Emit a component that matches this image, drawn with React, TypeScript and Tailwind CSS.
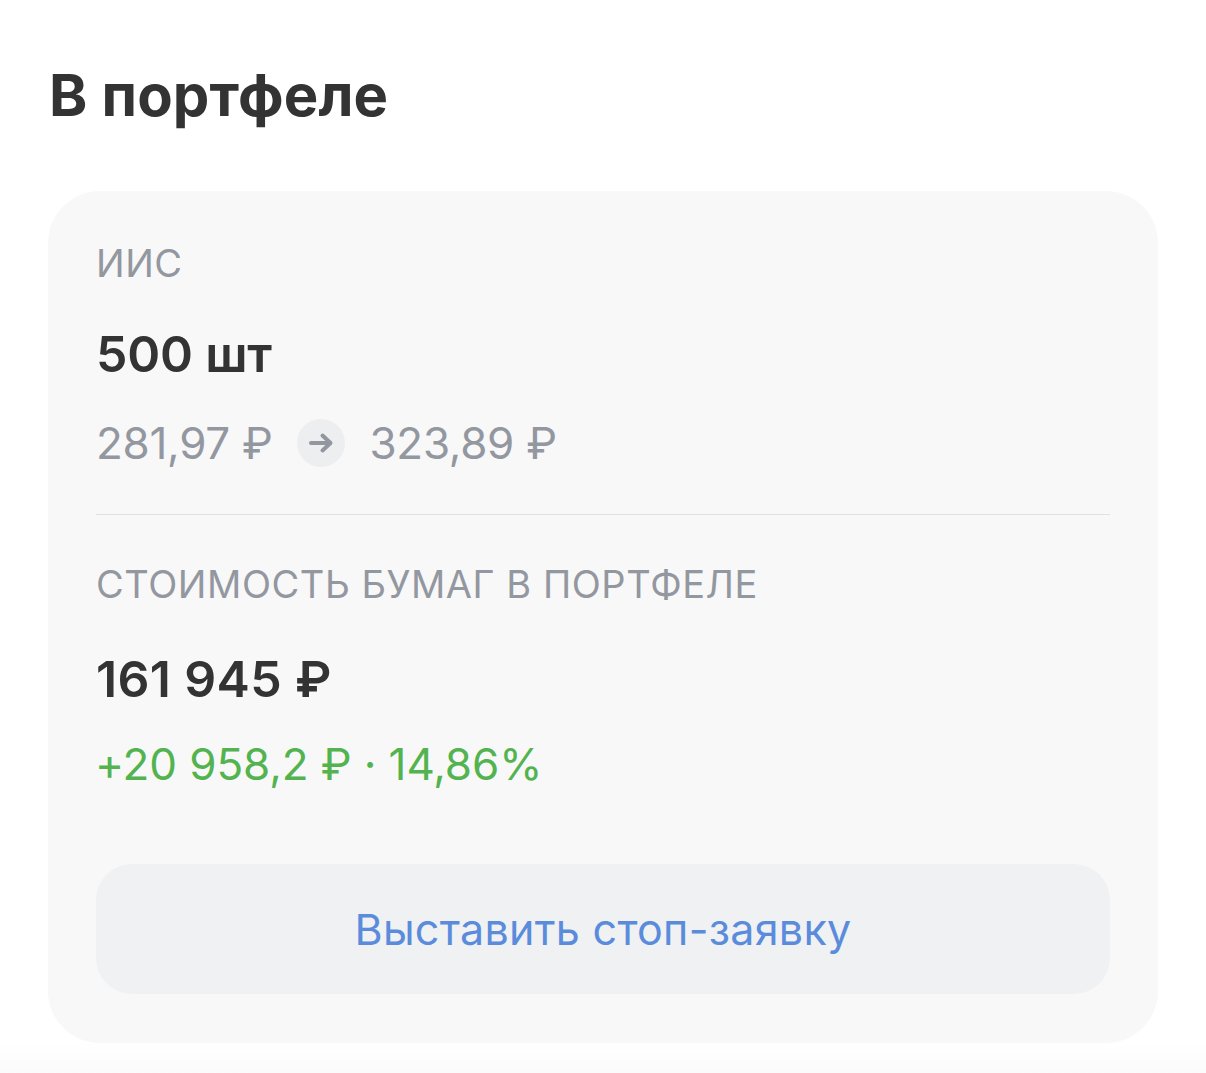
import React from 'react';

const font = { fontFamily: 'Inter, "Noto Sans", sans-serif' };

function RubleRow() {
  return (
    <div className="flex items-center h-[50px] text-[44px] leading-[50px] text-[#93979f] tracking-[-0.3px]">
      <span>281,97 ₽</span>
      <div className="ml-[25px] mr-[24px] w-[48px] h-[48px] rounded-full bg-[#eceef0] flex items-center justify-center">
        <svg width="26" height="22" viewBox="0 0 26 22" fill="none" stroke="#92969e" strokeWidth="4" strokeLinecap="round" strokeLinejoin="round">
          <path d="M3 11h19" />
          <path d="M14.5 3.5l8 7.5-8 7.5" />
        </svg>
      </div>
      <span>323,89 ₽</span>
    </div>
  );
}

export default function App() {
  return (
    <div className="w-[1206px] h-[1073px] overflow-hidden bg-gradient-to-b from-white from-[97%] to-[#fbfbfb]" style={font}>
      <div className="pt-[62px] pl-[49px]">
        <h1 className="text-[58px] leading-[66px] font-bold text-[#333333] tracking-[0.15px]">В портфеле</h1>
      </div>

      <div className="mt-[63px] mx-[48px] h-[852px] rounded-[52px] bg-[#f8f8f9] px-[48px] pt-[48px]">
        <div className="text-[38px] leading-[48px] text-[#93979f] tracking-[0.55px]">ИИС</div>
        <div className="mt-[39px] text-[50px] leading-[56px] font-semibold text-[#333333] tracking-[-0.2px]">500 шт</div>
        <div className="mt-[36px]">
          <RubleRow />
        </div>

        <div className="mt-[46px] h-px bg-[#dfe1e5]" />

        <div className="mt-[45px] text-[38px] leading-[48px] text-[#93979f] tracking-[0.55px] whitespace-nowrap">СТОИМОСТЬ БУМАГ В ПОРТФЕЛЕ</div>
        <div className="mt-[43px] text-[50px] leading-[56px] font-semibold text-[#333333] tracking-[0.35px]">161 945 ₽</div>
        <div className="mt-[30px] -ml-[1px] text-[44px] leading-[54px] text-[#52b34f] tracking-[-0.1px]">+20 958,2 ₽ · 14,86%</div>

        <button className="mt-[73px] w-full h-[130px] rounded-[36px] bg-[#eff1f3] text-[43px] text-[#5b8cdc] tracking-[0.3px]">
          Выставить стоп-заявку
        </button>
      </div>
    </div>
  );
}
